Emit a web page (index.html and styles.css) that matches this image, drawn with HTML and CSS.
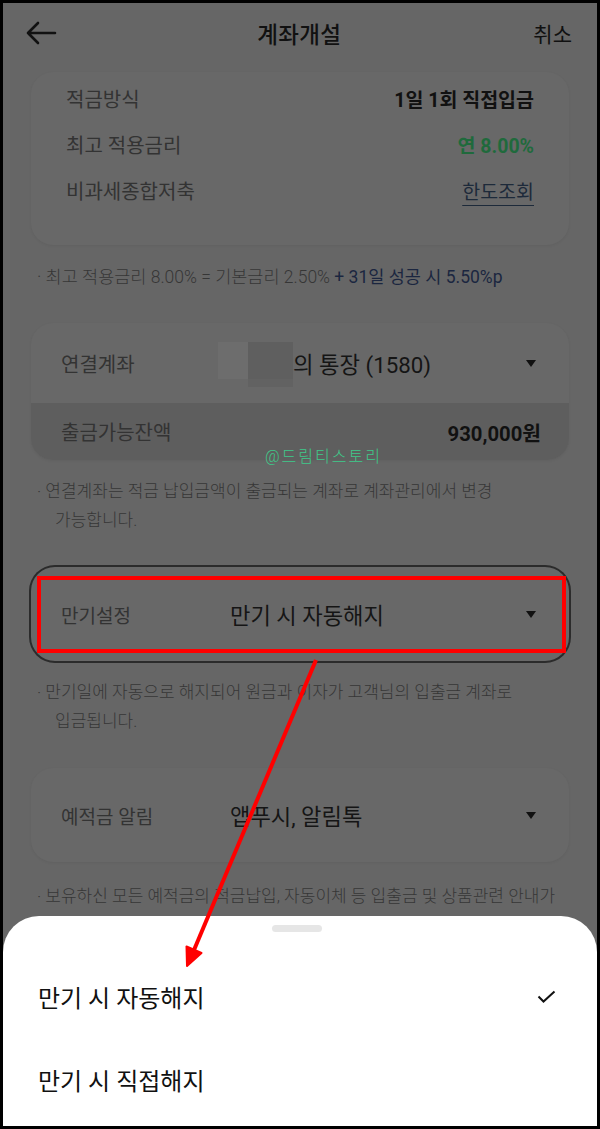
FILE: index.html
```html
<!DOCTYPE html>
<html lang="ko">
<head>
<meta charset="utf-8">
<title>계좌개설</title>
<link rel="stylesheet" href="styles.css">
</head>
<body>
<div class="frame">
  <header class="topbar">
    <svg class="back" width="32" height="24" viewBox="0 0 32 24"><path d="M30 12H3M13 2L3 12l10 10" fill="none" stroke="#111" stroke-width="2.6" stroke-linecap="round" stroke-linejoin="round"/></svg>
    <h1 class="title">계좌개설</h1>
    <span class="cancel">취소</span>
  </header>

  <section class="card card-info">
    <div class="info-row"><span class="label">적금방식</span><span class="val bold">1일 1회 직접입금</span></div>
    <div class="info-row"><span class="label">최고 적용금리</span><span class="val bold green">연 8.00%</span></div>
    <div class="info-row"><span class="label">비과세종합저축</span><span class="val link">한도조회</span></div>
  </section>
  <p class="note note-one">· 최고 적용금리 8.00% = 기본금리 2.50% <span class="navy">+ 31일 성공 시 5.50%p</span></p>

  <section class="card card-account">
    <div class="sel-row row-account">
      <span class="sel-label">연결계좌</span>
      <span class="sel-val"><span class="mosaic"><i class="m1"></i><i class="m2"></i><i class="m3"></i><i class="m4"></i></span>의 통장 (1580)</span>
      <span class="caret"></span>
    </div>
    <div class="balance-row">
      <span class="sel-label">출금가능잔액</span>
      <span class="balance">930,000원</span>
    </div>
  </section>
  <p class="note note-two">· 연결계좌는 적금 납입금액이 출금되는 계좌로 계좌관리에서 변경<br><span class="indent">가능합니다.</span></p>

  <section class="card card-sel focused">
    <div class="sel-row">
      <span class="sel-label">만기설정</span>
      <span class="sel-val big">만기 시 자동해지</span>
      <span class="caret"></span>
    </div>
    <div class="redbox"></div>
  </section>
  <p class="note note-two">· 만기일에 자동으로 해지되어 원금과 이자가 고객님의 입출금 계좌로<br><span class="indent">입금됩니다.</span></p>

  <section class="card card-sel">
    <div class="sel-row">
      <span class="sel-label">예적금 알림</span>
      <span class="sel-val big">앱푸시, 알림톡</span>
      <span class="caret"></span>
    </div>
  </section>
  <p class="note note-four">· 보유하신 모든 예적금의 적금납입, 자동이체 등 입출금 및 상품관련 안내가</p>

  <div class="watermark">@드림티스토리</div>

  <div class="sheet">
    <div class="handle"></div>
    <div class="option"><span>만기 시 자동해지</span>
      <svg class="check" width="19" height="13" viewBox="0 0 19 13"><path d="M1.5 6.5l5 5L17.5 1.5" fill="none" stroke="#111" stroke-width="2"/></svg>
    </div>
    <div class="option"><span>만기 시 직접해지</span></div>
  </div>

  <svg class="annot" width="600" height="1129" viewBox="0 0 600 1129">
    <line x1="316" y1="660" x2="194" y2="950" stroke="#ff0000" stroke-width="4"/>
    <polygon points="187,966 201.5,953 186.5,946.5" fill="#ff0000" stroke="#ff0000" stroke-width="2" stroke-linejoin="round"/>
  </svg>
</div>
</body>
</html>
```

FILE: styles.css
```css
* { box-sizing: border-box; }
html, body { margin: 0; padding: 0; }
body {
  font-family: Roboto, "Noto Sans CJK KR", "Noto Sans", sans-serif;
  background: #000;
}
.frame {
  position: relative;
  width: 600px;
  height: 1129px;
  border: 3px solid #000;
  background: #666666;
  overflow: hidden;
  color: #111;
}
.topbar {
  height: 60px;
  display: flex;
  align-items: center;
  justify-content: space-between;
  padding: 0 25px 0 22px;
}
.back { display: block; }
.title {
  margin: 0;
  font-size: 22.5px;
  font-weight: 500;
  color: #111;
  letter-spacing: 0.3px;
  transform: translateX(4px);
}
.cancel { font-size: 21px; color: #111; }

.card {
  margin: 0 28px;
  background: #686868;
  border-radius: 22px;
  box-shadow: 0 1px 3px rgba(0,0,0,0.06);
}
.card-info {
  margin-top: 9px;
  padding: 3px 35px 32px 35px;
}
.info-row {
  height: 46px;
  display: flex;
  align-items: center;
  justify-content: space-between;
}
.label { font-size: 20px; color: #333; }
.val { font-size: 19.5px; color: #111; }
.bold { font-weight: 700; }
.green { color: #1f6a3c; }
.link {
  color: #1d2a3a;
  text-decoration: underline;
  text-underline-offset: 6px;
  text-decoration-thickness: 1px;
}

.note {
  margin: 17px 20px 0 34px;
  font-size: 17px;
  line-height: 29px;
  font-weight: 300;
  color: #363636;
  white-space: nowrap;
}
.note-one { margin-top: 18px; line-height: 28px; font-size: 17.5px; }
.navy { color: #1b2640; font-weight: 400; }
.note-two { margin-top: 17px; }
.note-four { margin-top: 20px; }
.indent { padding-left: 18px; }

.card-account { margin-top: 32px; overflow: hidden; }
.card-sel { margin-top: 32px; }
.sel-row {
  display: flex;
  align-items: center;
  padding: 0 33px 0 30px;
  height: 94px;
}
.row-account { height: 80px; }
.sel-label { width: 157px; font-size: 19px; color: #333; flex: none; }
.row-account .sel-label, .balance-row .sel-label { font-size: 20px; }
.sel-val {
  flex: 1;
  display: flex;
  align-items: center;
  font-size: 22.3px;
  color: #151515;
}
.sel-val.big { font-size: 22.2px; padding-left: 12px; }
.caret {
  width: 0; height: 0;
  border-left: 5.5px solid transparent;
  border-right: 5.5px solid transparent;
  border-top: 7px solid #111;
}
.mosaic {
  display: grid;
  grid-template-columns: 30px 45px;
  grid-template-rows: 37px 8px;
  margin-top: 3px;
}
.mosaic i { display: block; }
.m1 { background: #6d6d6d; }
.m2 { background: #5f5f5f; }
.m3 { background: #686868; }
.m4 { background: #626262; }

.balance-row {
  height: 57px;
  background: #5e5e5e;
  display: flex;
  align-items: center;
  justify-content: space-between;
  padding: 0 28px 0 30px;
}
.balance { font-size: 20.3px; font-weight: 700; color: #111; }

.focused {
  position: relative;
  box-shadow: 0 0 0 2px #2b2b2b;
  border-radius: 24px;
}
.redbox {
  position: absolute;
  left: 6px; right: 3px; top: 9px; bottom: 8px;
  border: 4px solid #ff0000;
}

.watermark {
  position: absolute;
  left: 262px;
  top: 440px;
  font-size: 16px;
  color: #3fc98a;
  letter-spacing: 2px;
  font-weight: 300;
}

.sheet {
  position: absolute;
  left: 0; right: 0; bottom: 0;
  height: 210px;
  background: #fff;
  border-radius: 36px 36px 0 0;
  display: flex;
  flex-direction: column;
}
.handle {
  width: 50px;
  height: 7px;
  border-radius: 4px;
  background: #e6e6e6;
  margin: 9px auto 0;
  transform: translateX(-3px);
}
.option {
  height: 83px;
  display: flex;
  align-items: center;
  justify-content: space-between;
  padding: 0 41px 0 35px;
  font-size: 24px;
  color: #111;
}
.sheet .handle + .option { margin-top: 23px; }
.check { display: block; }

.annot {
  position: absolute;
  left: -3px;
  top: -3px;
  pointer-events: none;
}
```
